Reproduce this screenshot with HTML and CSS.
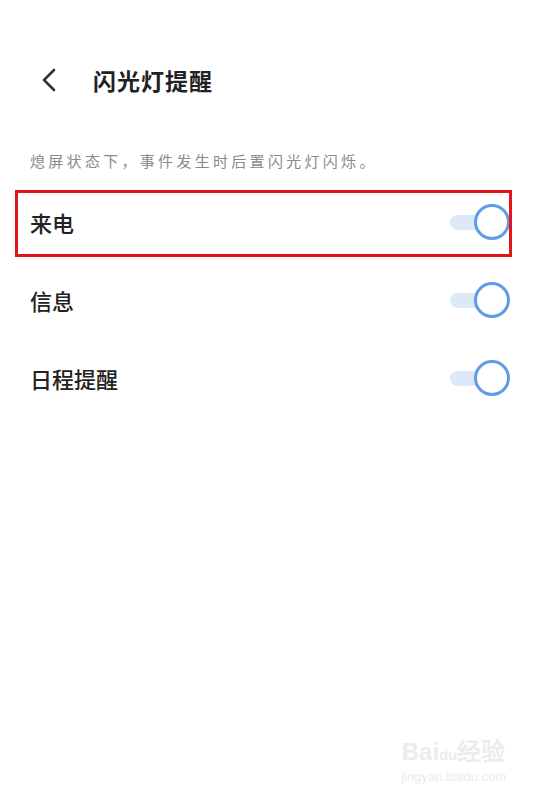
FILE: index.html
```html
<!DOCTYPE html>
<html lang="zh-CN">
<head>
    <meta charset="UTF-8">
    <meta name="viewport" content="width=device-width, initial-scale=1.0">
    <title>闪光灯提醒</title>
    <link rel="stylesheet" href="styles.css">
</head>
<body>
    <div class="page">
        <header class="topbar">
            <a class="back" href="#">
                <svg width="18" height="26" viewBox="0 0 18 26">
                    <path d="M14 3 L4 13 L14 23" fill="none" stroke="#333" stroke-width="2.6" stroke-linecap="round" stroke-linejoin="round"/>
                </svg>
            </a>
            <h1>闪光灯提醒</h1>
        </header>

        <p class="hint">熄屏状态下，事件发生时后置闪光灯闪烁。</p>

        <ul class="list">
            <li class="row marked">
                <span>来电</span>
                <span class="switch"><span class="knob"></span></span>
            </li>
            <li class="row">
                <span>信息</span>
                <span class="switch"><span class="knob"></span></span>
            </li>
            <li class="row">
                <span>日程提醒</span>
                <span class="switch"><span class="knob"></span></span>
            </li>
        </ul>

        <div class="watermark">
            <div class="wm-logo">Bai<span class="wm-du">du</span>经验</div>
            <div class="wm-url">jingyan.baidu.com</div>
        </div>
    </div>
</body>
</html>
```

FILE: styles.css
```css
body {
    margin: 0;
    padding: 0;
    background: #fff;
    font-family: "Noto Sans CJK SC", "Noto Sans", sans-serif;
    color: #222;
}
.page {
    position: relative;
    height: 799px;
    padding-top: 52px;
    box-sizing: border-box;
    overflow: hidden;
}
.topbar {
    display: flex;
    align-items: center;
    height: 56px;
    padding-left: 40px;
}
.back {
    display: flex;
    width: 18px;
    height: 26px;
}
.topbar h1 {
    margin: 0 0 0 35px;
    font-size: 23px;
    font-weight: bold;
    color: #222;
    letter-spacing: 1px;
}
.hint {
    margin: 42px 0 11px 30px;
    font-size: 15px;
    line-height: 22px;
    letter-spacing: 3.3px;
    color: #8a8a8a;
}
.list {
    margin: 0;
    padding: 0;
    list-style: none;
}
.row {
    position: relative;
    display: flex;
    justify-content: space-between;
    align-items: center;
    height: 78px;
    padding: 0 28px 0 30px;
    font-size: 22px;
    font-weight: 500;
    color: #222;
}
.marked::after {
    content: "";
    position: absolute;
    left: 15px;
    right: 26px;
    top: 7px;
    bottom: 4px;
    border: 3px solid #e3141c;
}
.switch {
    position: relative;
    display: flex;
    align-items: center;
    justify-content: flex-end;
    width: 60px;
    height: 36px;
}
.switch::before {
    content: "";
    position: absolute;
    left: 0;
    right: 20px;
    top: 11px;
    height: 15px;
    border-radius: 8px;
    background: #dde8f8;
}
.knob {
    position: relative;
    width: 36px;
    height: 36px;
    box-sizing: border-box;
    border: 3px solid #5e9ce6;
    border-radius: 50%;
    background: #fff;
}
.watermark {
    position: absolute;
    right: 32px;
    bottom: 14px;
    color: #ececec;
    text-align: center;
    font-family: "Liberation Sans", Arial, sans-serif;
}
.wm-logo {
    font-size: 24px;
    font-weight: bold;
    line-height: 28px;
}
.wm-du {
    font-size: 15px;
}
.wm-url {
    font-size: 13px;
    line-height: 16px;
}
```
